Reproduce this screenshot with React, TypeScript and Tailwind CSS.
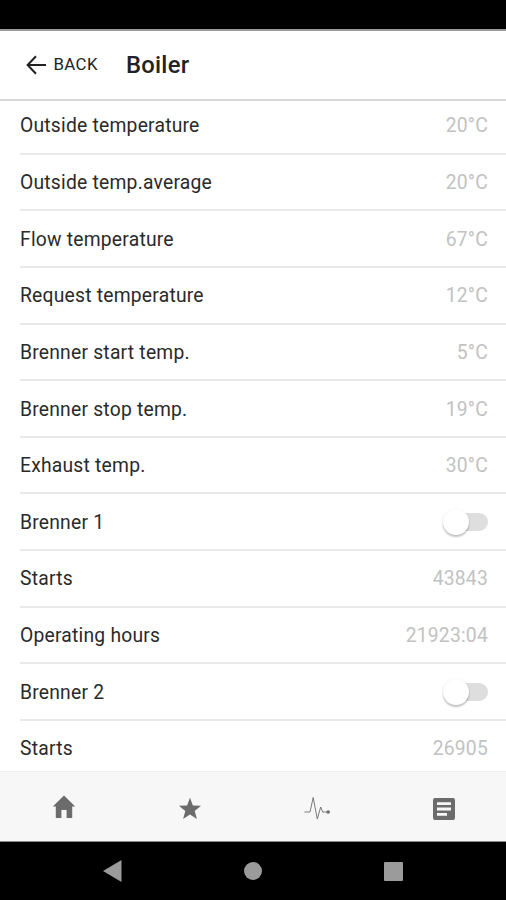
import React, { useState } from 'react';

interface BoilerItem {
  id: string;
  label: string;
  value?: string;
  toggle?: boolean;
}

const items: BoilerItem[] = [
  { id: 'outside', label: 'Outside temperature', value: '20°C' },
  { id: 'outsideAvg', label: 'Outside temp.average', value: '20°C' },
  { id: 'flow', label: 'Flow temperature', value: '67°C' },
  { id: 'request', label: 'Request temperature', value: '12°C' },
  { id: 'start', label: 'Brenner start temp.', value: '5°C' },
  { id: 'stop', label: 'Brenner stop temp.', value: '19°C' },
  { id: 'exhaust', label: 'Exhaust temp.', value: '30°C' },
  { id: 'brenner1', label: 'Brenner 1', toggle: true },
  { id: 'starts1', label: 'Starts', value: '43843' },
  { id: 'hours1', label: 'Operating hours', value: '21923:04' },
  { id: 'brenner2', label: 'Brenner 2', toggle: true },
  { id: 'starts2', label: 'Starts', value: '26905' },
];

const Toggle = ({ label }: { label: string }) => {
  const [on, setOn] = useState(false);

  return (
    <button
      role="switch"
      aria-checked={on}
      aria-label={label}
      onClick={() => setOn(!on)}
      className="flex h-[26px] w-[45px] items-center"
    >
      <span
        className={`ml-[5px] flex h-[18px] w-[40px] items-center rounded-full ${on ? 'justify-end bg-blue-300' : 'bg-[#dedede]'}`}
      >
        <span className="-ml-[5px] h-[26px] w-[26px] shrink-0 rounded-full bg-white shadow-[0_2px_2px_rgba(0,0,0,0.24),0_0_2px_rgba(0,0,0,0.08)]" />
      </span>
    </button>
  );
};

const Row = ({ item }: { item: BoilerItem }) => (
  <li className="ml-5 flex h-[56.65px] shrink-0 items-center justify-between border-b-2 border-[#e9e9e9] pr-[18px] text-[19.3px]">
    <span className="pt-[3px] tracking-[0.22px] text-[#2a2a2a]">{item.label}</span>
    {item.toggle ? (
      <Toggle label={item.label} />
    ) : (
      <span className="pt-[3px] tracking-[0.22px] text-[#c2c2c2]">{item.value}</span>
    )}
  </li>
);

const Header = () => (
  <header className="z-10 flex h-[72px] shrink-0 items-center border-t-2 border-b-2 border-t-[#9a9a9a] border-b-[#d8d8d8] bg-white pl-[26px]">
    <button className="flex items-center text-[#222]">
      <svg className="mr-[7.5px] h-5 w-5" viewBox="0 0 20 20" fill="none" stroke="currentColor" strokeWidth="2">
        <path d="M10 1.2 1.6 10l8.4 8.8M1.6 10H20" />
      </svg>
      <span className="-mt-px text-[16.8px] tracking-[0.4px]">BACK</span>
    </button>
    <h1 className="ml-[28px] pt-px text-[23.8px] font-medium tracking-[0.3px] text-[#222]">Boiler</h1>
  </header>
);

const TabBar = () => (
  <nav className="z-10 flex h-[71px] shrink-0 items-center border-t border-b border-t-[#eeeeee] border-b-[#8a8a8a] bg-[#f7f7f7] pl-px text-[#6c6c6c]">
    <button aria-label="Home" className="flex flex-1 justify-center">
      <svg className="mt-px h-[24px] w-[24px]" viewBox="0 0 24 24" fill="currentColor">
        <path d="M12 .6.8 11.4h3V23h5.6v-8h5.2v8h5.6V11.4h3z" />
      </svg>
    </button>
    <button aria-label="Favourites" className="flex flex-1 justify-center">
      <svg className="mt-[5px] h-[24px] w-[24px]" viewBox="0 0 24 24" fill="currentColor">
        <path d="m12 .7 2.9 7.7 8.2.4-6.4 5.1 2.2 8L12 17.4l-6.9 4.5 2.2-8L.9 8.8l8.2-.4z" />
      </svg>
    </button>
    <button aria-label="Activity" className="flex flex-1 justify-center">
      <svg className="mt-[5px] ml-px h-[26px] w-[28px]" viewBox="0 0 28 26" fill="none" stroke="currentColor">
        <path strokeWidth="0.9" strokeLinejoin="round" d="M1.5 16H7l3.2-14.5L14.3 23l3.4-12 2 5H25" />
        <circle cx="25.2" cy="16" r="1.8" fill="currentColor" stroke="none" />
      </svg>
    </button>
    <button aria-label="Report" className="flex flex-1 justify-center">
      <svg className="mt-[4px] ml-[2px] h-[22px] w-[22px]" viewBox="0 0 22 22" fill="currentColor">
        <rect width="22" height="22" rx="2" />
        <path stroke="#f7f7f7" strokeWidth="2.8" d="M4 5.6h14M4 11h14M4 16.4h10" />
      </svg>
    </button>
  </nav>
);

const SystemBar = () => (
  <footer className="flex h-[58px] shrink-0 items-center bg-black pl-[42px] text-[#9b9b9b]">
    <svg className="ml-[61px] h-[22px] w-[19px]" viewBox="0 0 19 22" fill="currentColor">
      <path d="M0 11 18.5 0v22z" />
    </svg>
    <span className="ml-[122px] h-[18px] w-[18px] rounded-full bg-[#9b9b9b]" />
    <span className="ml-[122px] h-[19px] w-[19px] rounded-[1px] bg-[#9b9b9b]" />
  </footer>
);

const App: React.FC = () => {
  return (
    <div className="flex h-[900px] w-[506px] flex-col overflow-hidden bg-white font-[Roboto,sans-serif]">
      <div className="h-[29px] shrink-0 bg-black" />
      <Header />
      <ul className="-mt-[3px] flex min-h-0 flex-1 flex-col overflow-hidden">
        {items.map(item => (
          <Row key={item.id} item={item} />
        ))}
      </ul>
      <TabBar />
      <SystemBar />
    </div>
  );
};

export default App;
